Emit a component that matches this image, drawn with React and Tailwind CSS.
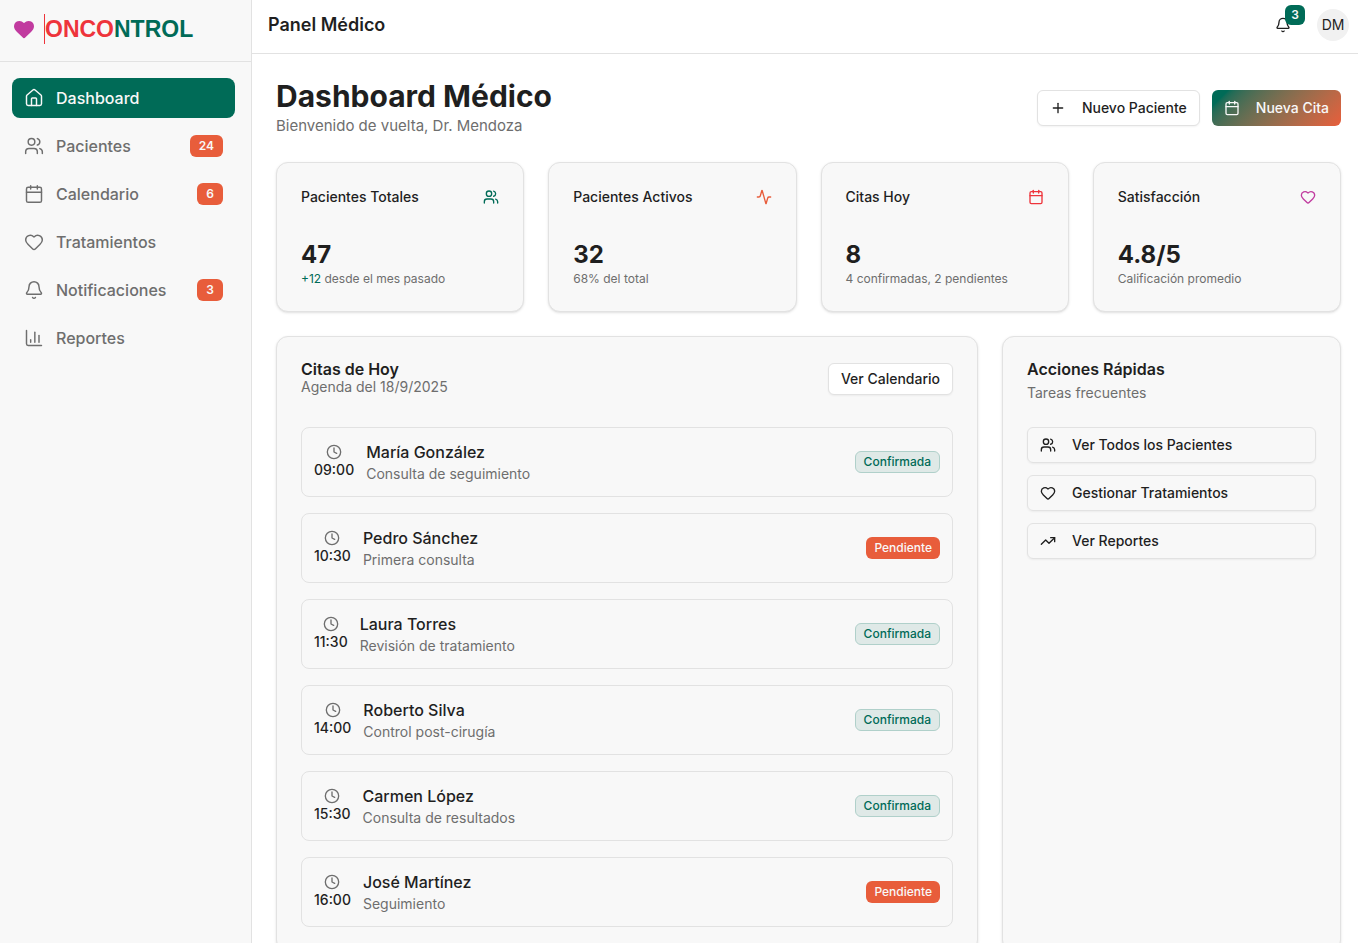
import {
  Activity,
  Bell,
  Calendar,
  ChartColumn,
  Clock,
  Heart,
  House,
  Plus,
  TrendingUp,
  Users,
} from "lucide-react";

const navItems = [
  { label: "Dashboard", icon: House, active: true },
  { label: "Pacientes", icon: Users, badge: 24 },
  { label: "Calendario", icon: Calendar, badge: 6 },
  { label: "Tratamientos", icon: Heart },
  { label: "Notificaciones", icon: Bell, badge: 3 },
  { label: "Reportes", icon: ChartColumn },
];

const stats = [
  { title: "Pacientes Totales", value: "47", accent: "+12", note: " desde el mes pasado", icon: Users, color: "text-[#006b57]" },
  { title: "Pacientes Activos", value: "32", note: "68% del total", icon: Activity, color: "text-[#e85d3b]" },
  { title: "Citas Hoy", value: "8", note: "4 confirmadas, 2 pendientes", icon: Calendar, color: "text-[#ee343b]" },
  { title: "Satisfacción", value: "4.8/5", note: "Calificación promedio", icon: Heart, color: "text-[#c13b9f]" },
];

const appointments = [
  { time: "09:00", name: "María González", type: "Consulta de seguimiento", confirmed: true },
  { time: "10:30", name: "Pedro Sánchez", type: "Primera consulta", confirmed: false },
  { time: "11:30", name: "Laura Torres", type: "Revisión de tratamiento", confirmed: true },
  { time: "14:00", name: "Roberto Silva", type: "Control post-cirugía", confirmed: true },
  { time: "15:30", name: "Carmen López", type: "Consulta de resultados", confirmed: true },
  { time: "16:00", name: "José Martínez", type: "Seguimiento", confirmed: false },
];

const quickActions = [
  { label: "Ver Todos los Pacientes", icon: Users },
  { label: "Gestionar Tratamientos", icon: Heart },
  { label: "Ver Reportes", icon: TrendingUp },
];

function Sidebar() {
  return (
    <aside className="flex w-[252px] shrink-0 flex-col border-r border-[#e2e2e2] bg-[#f8f8f8]">
      <div className="flex h-[62px] shrink-0 items-center gap-2 border-b border-[#e2e2e2] pb-1 pl-3">
        <Heart className="size-6 fill-current text-[#c13b9f]" strokeWidth={0} />
        <div className="border-l border-[#ee343b] font-['Liberation_Sans',Arial,sans-serif] text-[23px] leading-[30px] font-bold">
          <span className="text-[#ee343b]">ONCO</span>
          <span className="text-[#006b57]">NTROL</span>
        </div>
      </div>
      <nav className="flex flex-col gap-2 py-4 pr-4 pl-3">
        {navItems.map(({ label, icon: Icon, badge, active }) => (
          <a
            key={label}
            href="#"
            className={
              active
                ? "flex h-10 items-center gap-3 rounded-lg bg-[#006b57] px-3 font-medium text-[#f8f8f8]"
                : "flex h-10 items-center gap-3 rounded-lg px-3 font-[450] text-[#6e6e6e]"
            }
          >
            <Icon className="size-5" strokeWidth={1.75} />
            <span className="flex-1">{label}</span>
            {badge && (
              <span className="rounded-md bg-[#e85d3b] px-[9px] py-[3px] text-xs font-semibold text-[#f8f8f8]">
                {badge}
              </span>
            )}
          </a>
        ))}
      </nav>
    </aside>
  );
}

function Header() {
  return (
    <header className="flex shrink-0 items-center justify-between border-b border-[#e2e2e2] pt-[9px] pr-[9px] pb-3 pl-4">
      <div className="text-lg leading-7 font-semibold">Panel Médico</div>
      <div className="flex items-center gap-4">
        <button type="button" aria-label="Notificaciones" className="relative flex h-8 w-9 items-center justify-center">
          <Bell className="size-4" />
          <span className="absolute -top-1 -right-1 flex size-5 items-center justify-center rounded-md bg-[#006b57] text-xs font-semibold text-[#f8f8f8]">
            3
          </span>
        </button>
        <button type="button" className="flex size-8 items-center justify-center rounded-full bg-[#f1f1f1] text-sm">
          DM
        </button>
      </div>
    </header>
  );
}

function StatCard({ title, value, accent, note, icon: Icon, color }) {
  return (
    <section className="flex flex-col gap-6 rounded-xl border border-[#e2e2e2] bg-[#f8f8f8] p-6 shadow-sm">
      <div className="flex items-center justify-between pb-2">
        <h2 className="text-sm font-[450]">{title}</h2>
        <Icon className={`size-4 ${color}`} />
      </div>
      <div>
        <div className="text-2xl leading-8 font-bold">{value}</div>
        <p className="text-xs text-[#6e6e6e]">
          {accent && <span className="text-[#006b57]">{accent}</span>}
          {note}
        </p>
      </div>
    </section>
  );
}

function Appointment({ time, name, type, confirmed }) {
  return (
    <li className="flex items-center justify-between rounded-lg border border-[#e2e2e2] p-3">
      <div className="flex items-center gap-3">
        <div className="flex flex-col items-center">
          <Clock className="size-4 text-[#6e6e6e]" />
          <span className="text-sm font-medium">{time}</span>
        </div>
        <div>
          <p className="font-[450]">{name}</p>
          <p className="text-sm text-[#6e6e6e]">{type}</p>
        </div>
      </div>
      {confirmed ? (
        <span className="rounded-md border border-[#b0d0ca] bg-[#dfe9e7] px-2 py-[2px] text-xs font-[450] text-[#006b57]">
          Confirmada
        </span>
      ) : (
        <span className="rounded-md bg-[#e85d3b] px-2 py-[3px] text-xs font-medium text-[#f8f8f8]">
          Pendiente
        </span>
      )}
    </li>
  );
}

export default function App() {
  return (
    <div className="flex h-screen overflow-hidden bg-white font-[Inter,sans-serif] text-[#1f1f1f]">
      <Sidebar />
      <div className="flex min-w-0 flex-1 flex-col">
        <Header />
        <main className="flex flex-1 flex-col gap-6 overflow-y-auto pt-6 pr-[17px] pb-6 pl-6 [scrollbar-width:none]">
          <div className="flex items-center justify-between">
            <div>
              <h1 className="text-3xl leading-9 font-bold">Dashboard Médico</h1>
              <p className="text-[15px] leading-6 text-[#6e6e6e]">Bienvenido de vuelta, Dr. Mendoza</p>
            </div>
            <div className="flex gap-3">
              <button
                type="button"
                className="flex h-9 items-center gap-4 rounded-md border border-[#e2e2e2] bg-white px-3 text-sm font-[450] shadow-xs"
              >
                <Plus className="size-4" />
                Nuevo Paciente
              </button>
              <button
                type="button"
                className="flex h-9 items-center gap-4 rounded-md bg-linear-135 from-[#006b57] from-10% to-[#e85d3b] px-3 text-sm font-medium text-[#f8f8f8]"
              >
                <Calendar className="size-4" />
                Nueva Cita
              </button>
            </div>
          </div>

          <div className="grid grid-cols-4 gap-6">
            {stats.map((s) => (
              <StatCard key={s.title} {...s} />
            ))}
          </div>

          <div className="grid grid-cols-3 gap-6">
            <section className="col-span-2 flex flex-col gap-6 rounded-xl border border-[#e2e2e2] bg-[#f8f8f8] p-6 shadow-sm">
              <div className="flex items-center justify-between pb-[6px]">
                <div>
                  <h2 className="leading-4 font-semibold">Citas de Hoy</h2>
                  <p className="text-sm text-[#6e6e6e]">Agenda del 18/9/2025</p>
                </div>
                <button
                  type="button"
                  className="h-8 rounded-md border border-[#e2e2e2] bg-white px-3 text-sm font-[450] shadow-xs"
                >
                  Ver Calendario
                </button>
              </div>
              <ul className="flex flex-col gap-4">
                {appointments.map((a) => (
                  <Appointment key={a.time} {...a} />
                ))}
              </ul>
            </section>

            <section className="flex flex-col gap-6 rounded-xl border border-[#e2e2e2] bg-[#f8f8f8] p-6 shadow-sm">
              <div className="flex flex-col gap-[6px]">
                <h2 className="leading-4 font-semibold">Acciones Rápidas</h2>
                <p className="text-sm text-[#6e6e6e]">Tareas frecuentes</p>
              </div>
              <div className="flex flex-col gap-3">
                {quickActions.map(({ label, icon: Icon }) => (
                  <button
                    key={label}
                    type="button"
                    className="flex h-9 items-center gap-4 rounded-md border border-[#e2e2e2] px-3 text-sm font-[450] shadow-xs"
                  >
                    <Icon className="size-4" />
                    {label}
                  </button>
                ))}
              </div>
            </section>
          </div>
        </main>
      </div>
    </div>
  );
}
